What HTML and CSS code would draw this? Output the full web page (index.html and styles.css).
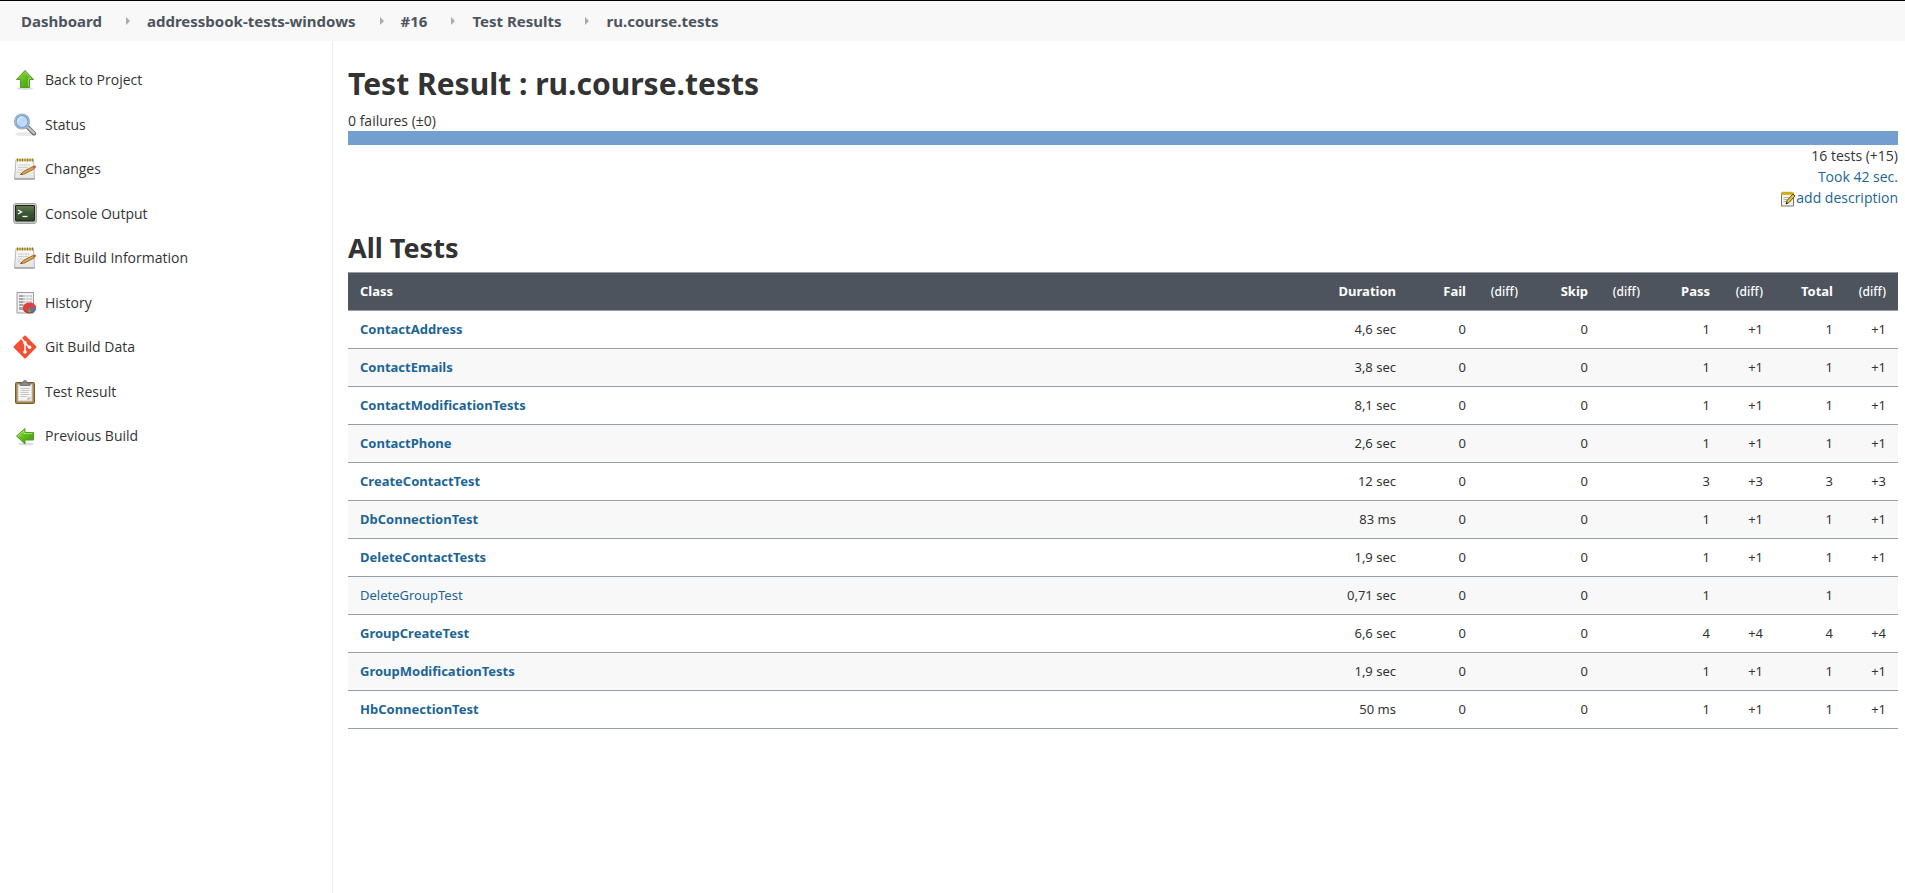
FILE: index.html
```
<!DOCTYPE html>
<html lang="en">
<head>
<meta charset="utf-8">
<title>Test Result : ru.course.tests</title>
<link rel="stylesheet" href="styles.css">
</head>
<body>
<svg class="defs" aria-hidden="true">
  <defs>
    <linearGradient id="green" x1="0" y1="0" x2="1" y2="1"><stop offset="0" stop-color="#a2e04c"/><stop offset="0.5" stop-color="#5fb91c"/><stop offset="1" stop-color="#3f9a12"/></linearGradient>
    <linearGradient id="lens" x1="0" y1="0" x2="1" y2="1"><stop offset="0" stop-color="#f4f9fe"/><stop offset="0.5" stop-color="#b9d6f5"/><stop offset="1" stop-color="#dcebfa"/></linearGradient>
    <linearGradient id="screen" x1="0" y1="0" x2="0" y2="1"><stop offset="0" stop-color="#5f7a50"/><stop offset="0.5" stop-color="#3b5533"/><stop offset="1" stop-color="#2c4527"/></linearGradient>
    <linearGradient id="paper" x1="0" y1="0" x2="0" y2="1"><stop offset="0" stop-color="#fbfbfa"/><stop offset="1" stop-color="#e4e4e0"/></linearGradient>
    <symbol id="notepad" viewBox="0 0 24 24">
      <path d="M3 2.500h17.500l1 19.500H1.500z" fill="url(#paper)" stroke="#b9b8b2"/>
      <path d="M1.500 22h20" stroke="#8f8e89"/>
      <path d="M3.500 3h17" stroke="#d3bd62" stroke-width="2.400"/>
      <path d="M4.500 1.500v3M7 1.500v3M9.500 1.500v3M12 1.500v3M14.500 1.500v3M17 1.500v3M19.500 1.500v3" stroke="#8d7b2e" stroke-width="1"/>
      <path d="M5 8h12M5 10.500h10M4.500 13h6M4.500 15.500h3" stroke="#ccced1"/>
      <path d="M7.500 17.500l3-3.200L20 9.500l1.300 2.300L11.500 17z" fill="#dca24c" stroke="#8c5d26" stroke-width="0.800"/>
      <path d="M19.800 9.300l1.700-.9q1.800 0 1.700 1.900l-2 1.300z" fill="#d45a48"/>
      <path d="M7.500 17.500l1-1.200 1 .9z" fill="#333"/>
    </symbol>
  </defs>
</svg>

<header class="topbar">
  <nav aria-label="Breadcrumb">
    <ol class="crumbs">
      <li><a href="#">Dashboard</a></li>
      <li><a href="#">addressbook-tests-windows</a></li>
      <li><a href="#">#16</a></li>
      <li><a href="#">Test Results</a></li>
      <li><a href="#">ru.course.tests</a></li>
    </ol>
  </nav>
</header>

<div class="layout">
  <nav class="side" aria-label="Tasks">
    <ul class="tasks">
      <li><a href="#"><svg class="icon" viewBox="0 0 24 24" aria-hidden="true"><ellipse cx="12" cy="20.500" rx="8" ry="1.500" fill="#ddd"/><path d="M12 2.500l8.500 9h-4v8h-9v-8h-4z" fill="url(#green)" stroke="#4c9d20"/><path d="M12 4.200l6 6.300h-2.500v8" fill="none" stroke="#a9e36e" stroke-width="0.800"/></svg>Back to Project</a></li>
      <li><a href="#"><svg class="icon" viewBox="0 0 24 24" aria-hidden="true"><ellipse cx="12" cy="21" rx="10" ry="2" fill="#e9e9e9"/><path d="M14.500 14l6.500 6.500" stroke="#777" stroke-width="4.400" stroke-linecap="round"/><path d="M15 14.500l6 5.500" stroke="#c8c8c8" stroke-width="2" stroke-linecap="round"/><circle cx="9" cy="8.500" r="7.400" fill="url(#lens)" stroke="#a3adba" stroke-width="1.400"/><circle cx="9" cy="8.500" r="6" fill="none" stroke="#6fa1da" stroke-width="1.200"/></svg>Status</a></li>
      <li><a href="#"><svg class="icon" aria-hidden="true"><use href="#notepad"/></svg>Changes</a></li>
      <li><a href="#"><svg class="icon" viewBox="0 0 24 24" aria-hidden="true"><rect x="0.500" y="1.500" width="23" height="20" rx="2.500" fill="#c9cac6" stroke="#a4a5a1"/><rect x="2.500" y="3.500" width="19" height="15.500" rx="0.500" fill="url(#screen)" stroke="#1e241c"/><path d="M5 8l3.500 2L5 12" fill="none" stroke="#fff" stroke-width="1.300"/><path d="M9.500 14.500h5" stroke="#fff" stroke-width="1.300"/></svg>Console Output</a></li>
      <li><a href="#"><svg class="icon" aria-hidden="true"><use href="#notepad"/></svg>Edit Build Information</a></li>
      <li><a href="#"><svg class="icon" viewBox="0 0 24 24" aria-hidden="true"><path d="M4 1.500h16.500v20.500H4z" fill="#f2f2f1" stroke="#999a98"/><path d="M6 4h13v15H6z" fill="#c9cbcd"/><path d="M6 4h4v15H6z" fill="#a3a7ab"/><path d="M6 6.500h13M6 9.500h13M6 12.500h13M6 15.500h13M13 4v15M16 4v15" stroke="#f2f2f1"/><ellipse cx="16.500" cy="17.500" rx="6.500" ry="5" fill="#a31f1f"/><ellipse cx="16.500" cy="16.500" rx="6.500" ry="5" fill="#e04040"/><path d="M16.500 16l-1.500 5.300q2 .5 3.500 0z" fill="#63ad3b"/><path d="M16.500 16l2 5.300q3.500-.6 4.500-3.800z" fill="#4f77b8"/></svg>History</a></li>
      <li><a href="#"><svg class="icon" viewBox="0 0 24 24" aria-hidden="true"><path d="M12 1.500L22.500 12 12 22.500 1.500 12z" fill="#f05133" stroke="#f05133" stroke-width="2" stroke-linejoin="round"/><path d="M8.500 3.500l3.500 4V17M12 8l4.500 4.500" fill="none" stroke="#fff" stroke-width="1.500"/><g fill="#fff"><circle cx="12" cy="7.800" r="1.800"/><circle cx="12" cy="17" r="1.800"/><circle cx="16.500" cy="12.300" r="1.800"/></g></svg>Git Build Data</a></li>
      <li><a href="#"><svg class="icon" viewBox="0 0 24 24" aria-hidden="true"><rect x="2.500" y="2.500" width="19" height="21" rx="1" fill="#a9854f" stroke="#78582b"/><path d="M5 4.500h14V21H5z" fill="#f4f4f2" stroke="#c9c9c4"/><path d="M7.500 8.500h9M7.500 10.500h9M7.500 12.500h8M7.500 14.500h9M7.500 16.500h6" stroke="#c4c6c8"/><path d="M14.500 21v-3.500H19z" fill="#c0c0bc"/><path d="M7 5.500v-2q1-1 3-1 0-2 2-2t2 2q2 0 3 1v2z" fill="#878a86" stroke="#5f625e" stroke-width="0.700"/></svg>Test Result</a></li>
      <li><a href="#"><svg class="icon" viewBox="0 0 24 24" aria-hidden="true"><ellipse cx="13" cy="20" rx="8" ry="1.500" fill="#ddd"/><path d="M3.500 12l8.500-7.500v4h8.500v7.500H12v4z" fill="url(#green)" stroke="#4c9d20"/><path d="M5 12l6-5.300v2.800h8.500" fill="none" stroke="#b4e680" stroke-width="0.800"/></svg>Previous Build</a></li>
    </ul>
  </nav>

  <main class="main">
    <h1>Test Result : ru.course.tests</h1>
    <div class="failures">0 failures (±0)</div>
    <div class="bar" role="img" aria-label="All tests passed"></div>
    <div class="summary">
      <span>16 tests (+15)</span>
      <a href="#">Took 42 sec.</a>
      <a class="describe" href="#"><svg class="icon-small" viewBox="0 0 16 16" aria-hidden="true"><path d="M1.500 2h12v13h-12z" fill="#f5f3ea" stroke="#77776f"/><path d="M1.500 2.500h12" stroke="#dfc02d" stroke-width="3"/><path d="M3 .5v3M5 .5v3M7 .5v3M9 .5v3M11 .5v3" stroke="#a88b18" stroke-width="0.700"/><path d="M3.500 6.500h6M3.500 8.500h4M3.500 10.500h3" stroke="#b7b7b1"/><path d="M6 13l1-3.500L13 3l2 2-6 6.500z" fill="#f0c43c" stroke="#3f3819" stroke-width="0.900"/><path d="M6 13l.6-2 1.500 1.200z" fill="#222"/></svg>add description</a>
    </div>

    <h2>All Tests</h2>
    <table class="results">
      <colgroup><col><col class="c-dur"><col class="c-num"><col class="c-diff"><col class="c-num"><col class="c-diff"><col class="c-num"><col class="c-diff-wide"><col class="c-num"><col class="c-diff-wide"></colgroup>
      <thead>
        <tr><th scope="col">Class</th><th scope="col">Duration</th><th scope="col">Fail</th><th scope="col" class="diff">(diff)</th><th scope="col">Skip</th><th scope="col" class="diff">(diff)</th><th scope="col">Pass</th><th scope="col" class="diff">(diff)</th><th scope="col">Total</th><th scope="col" class="diff">(diff)</th></tr>
      </thead>
      <tbody>
        <tr><td><a class="new" href="#">ContactAddress</a></td><td>4,6 sec</td><td>0</td><td></td><td>0</td><td></td><td>1</td><td>+1</td><td>1</td><td>+1</td></tr>
        <tr><td><a class="new" href="#">ContactEmails</a></td><td>3,8 sec</td><td>0</td><td></td><td>0</td><td></td><td>1</td><td>+1</td><td>1</td><td>+1</td></tr>
        <tr><td><a class="new" href="#">ContactModificationTests</a></td><td>8,1 sec</td><td>0</td><td></td><td>0</td><td></td><td>1</td><td>+1</td><td>1</td><td>+1</td></tr>
        <tr><td><a class="new" href="#">ContactPhone</a></td><td>2,6 sec</td><td>0</td><td></td><td>0</td><td></td><td>1</td><td>+1</td><td>1</td><td>+1</td></tr>
        <tr><td><a class="new" href="#">CreateContactTest</a></td><td>12 sec</td><td>0</td><td></td><td>0</td><td></td><td>3</td><td>+3</td><td>3</td><td>+3</td></tr>
        <tr><td><a class="new" href="#">DbConnectionTest</a></td><td>83 ms</td><td>0</td><td></td><td>0</td><td></td><td>1</td><td>+1</td><td>1</td><td>+1</td></tr>
        <tr><td><a class="new" href="#">DeleteContactTests</a></td><td>1,9 sec</td><td>0</td><td></td><td>0</td><td></td><td>1</td><td>+1</td><td>1</td><td>+1</td></tr>
        <tr><td><a href="#">DeleteGroupTest</a></td><td>0,71 sec</td><td>0</td><td></td><td>0</td><td></td><td>1</td><td></td><td>1</td><td></td></tr>
        <tr><td><a class="new" href="#">GroupCreateTest</a></td><td>6,6 sec</td><td>0</td><td></td><td>0</td><td></td><td>4</td><td>+4</td><td>4</td><td>+4</td></tr>
        <tr><td><a class="new" href="#">GroupModificationTests</a></td><td>1,9 sec</td><td>0</td><td></td><td>0</td><td></td><td>1</td><td>+1</td><td>1</td><td>+1</td></tr>
        <tr><td><a class="new" href="#">HbConnectionTest</a></td><td>50 ms</td><td>0</td><td></td><td>0</td><td></td><td>1</td><td>+1</td><td>1</td><td>+1</td></tr>
      </tbody>
    </table>
  </main>
</div>
</body>
</html>
```
FILE: styles.css
```
* { box-sizing: border-box; }

body {
  margin: 0;
  min-height: 100vh;
  display: flex;
  flex-direction: column;
  background: #fff;
  color: #333;
  font: 13px/21px "Noto Sans", "Open Sans", sans-serif;
}

a { color: #1c6594; text-decoration: none; }
a:hover { text-decoration: underline; }
ul, ol { list-style: none; margin: 0; padding: 0; }

.defs { position: absolute; width: 0; height: 0; }

.topbar {
  border-top: 1px solid #000;
  background: #f8f8f8;
  padding: 0 21px;
}

.crumbs { display: flex; line-height: 40px; font-size: 15px; font-weight: 700; }
.crumbs li { display: flex; align-items: center; }
.crumbs a { color: #4d545d; }
.crumbs li + li::before {
  content: "";
  margin: 0 17px 0 24px;
  border: 4px solid transparent;
  border-left-color: #aaa;
  border-right: 0;
}

.layout { flex: 1; display: flex; }

.side {
  flex: 0 0 333px;
  border-right: 1px solid #ececec;
  padding: 17px 13px;
}

.tasks a {
  display: flex;
  align-items: center;
  gap: 8px;
  padding: 10px 0;
  color: #333;
  font-family: "Open Sans", "Noto Sans", sans-serif;
  font-size: 14px;
  line-height: 1.75;
}

.icon { width: 24px; height: 24px; flex: none; }
.icon-small { width: 16px; height: 16px; vertical-align: -4px; }

.main { flex: 1; min-width: 0; padding: 21px 7px 21px 15px; }

h1 { margin: 0 0 5px; font-size: 30px; line-height: 44px; }
h2 { margin: 22px 0 6px; font-size: 27px; line-height: 36px; }

.failures, .summary {
  font-family: "Open Sans", "Noto Sans", sans-serif;
  font-size: 14px;
}
.failures { line-height: 20px; }
.bar { height: 14px; background: #729fcf; }

.summary { display: flex; flex-direction: column; align-items: flex-end; }

.results {
  width: 100%;
  table-layout: fixed;
  border-collapse: collapse;
}
.c-dur { width: 100px; }
.c-num { width: 70px; }
.c-diff { width: 52px; }
.c-diff-wide { width: 53px; }

.results th, .results td {
  height: 38px;
  padding: 0 12px;
  text-align: right;
  border-bottom: 1px solid #969fa5;
}
.results th:first-child, .results td:first-child { text-align: left; }
.results th { background: #4d545d; color: #fff; font-weight: 700; border-top: 1px solid #969fa5; }
.results .diff { font-size: 12px; font-weight: 500; }
.results tbody tr:nth-child(even) { background: #f8f8f8; }
.new { font-weight: 700; }
```
